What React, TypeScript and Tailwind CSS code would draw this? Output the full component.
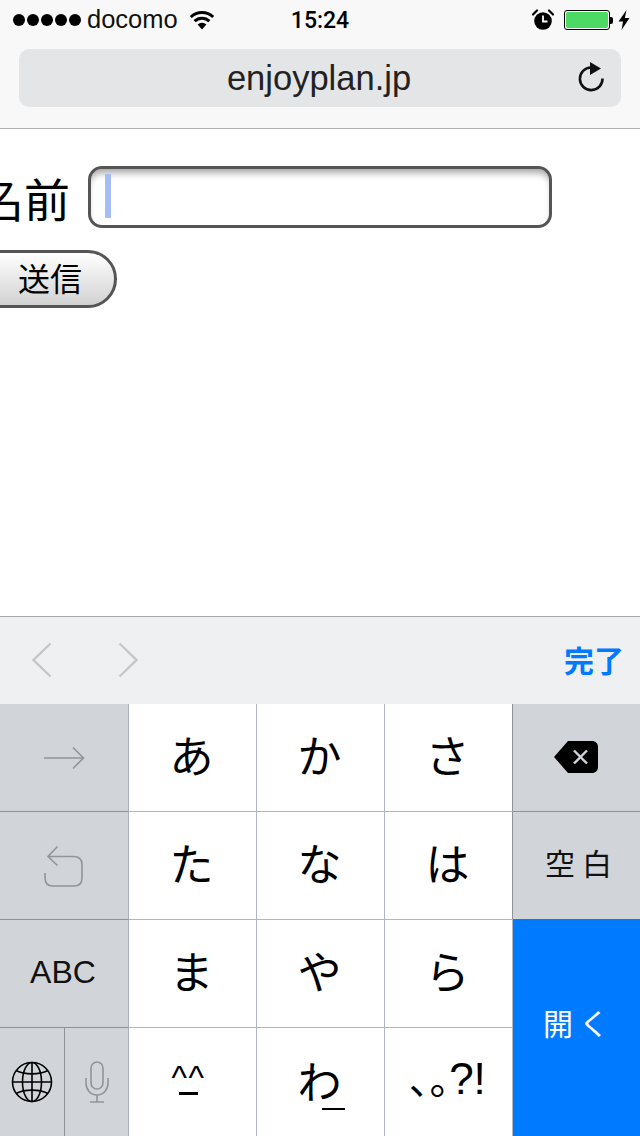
import type { ReactNode } from "react";

const latin = "font-['Liberation_Sans','Noto_Sans_CJK_JP',sans-serif]";
const jp = "font-['Noto_Sans_CJK_JP',sans-serif]";

function Wifi() {
  return (
    <svg width="26" height="19" viewBox="0 0 26 19" className="ml-[11px]">
      <path d="M13 18.500 L8.600 13.500 A6.600 6.600 0 0 1 17.400 13.500 Z" fill="#000" />
      <path d="M5.600 10.200 A10.800 10.800 0 0 1 20.400 10.200" fill="none" stroke="#000" strokeWidth="3" />
      <path d="M1.800 6 A16.200 16.200 0 0 1 24.200 6" fill="none" stroke="#000" strokeWidth="3" />
    </svg>
  );
}

function Alarm() {
  return (
    <svg width="22" height="22" viewBox="0 0 22 22">
      <circle cx="11" cy="12" r="8.800" fill="#000" />
      <path d="M11 6.500V12.500H15.500" fill="none" stroke="#fff" strokeWidth="1.800" />
      <path d="M1 5.500 L5 1.500 M21 5.500 L17 1.500" stroke="#000" strokeWidth="2.200" strokeLinecap="round" />
    </svg>
  );
}

function Battery() {
  return (
    <div className="ml-[10px] flex items-center">
      <div className="w-[46px] h-[20px] rounded-[3px] border border-black p-[1px] bg-white">
        <div className="w-full h-full rounded-[2px] bg-[#4cd964]" />
      </div>
      <div className="w-[3px] h-[7px] rounded-r-[2px] bg-black" />
    </div>
  );
}

function Bolt() {
  return (
    <svg width="12" height="20" viewBox="0 0 12 20" className="ml-[5px]">
      <path d="M8.500 0 L0.500 11.500 H5 L3.500 20 L11.500 8 H6.800 Z" fill="#000" />
    </svg>
  );
}

function Reload() {
  return (
    <svg width="30" height="32" viewBox="0 0 30 32">
      <path d="M15 6.500 A11.300 11.300 0 1 0 26.500 17.500" fill="none" stroke="#111" strokeWidth="2.600" />
      <path d="M14 1 L25 7.500 L14 14 Z" fill="#111" />
    </svg>
  );
}

function Chevron({ dir }: { dir: "l" | "r" }) {
  return (
    <svg width="22" height="36" viewBox="0 0 22 36" className="-mt-[2px]">
      <path d={dir === "l" ? "M19.500 1.500 L2.500 18 L19.500 34.500" : "M2.500 1.500 L19.500 18 L2.500 34.500"} fill="none" stroke="#c4c6c9" strokeWidth="2.400" />
    </svg>
  );
}

function ArrowKey() {
  return (
    <svg width="42" height="24" viewBox="0 0 42 24">
      <path d="M1 12H40 M30 1.500 L40.500 12 L30 22.500" fill="none" stroke="#929497" strokeWidth="1.600" />
    </svg>
  );
}

function UndoKey() {
  return (
    <svg width="40" height="42" viewBox="0 0 40 42">
      <path d="M1 28V33C1 38 4 41 9 41H30C35 41 38 38 38 33V19C38 14.500 35 11.500 30 11.500H4.500 M13.500 1.500 L4 11.500 L13.500 20.500" fill="none" stroke="#929497" strokeWidth="1.600" />
    </svg>
  );
}

function Backspace() {
  return (
    <svg width="44" height="32" viewBox="0 0 44 32" className="mr-[2px] -mt-[1px]">
      <path d="M14 0H38C41.500 0 44 2.500 44 6V26C44 29.500 41.500 32 38 32H14L0 16Z" fill="#000" />
      <path d="M20 9.500L33 22.500M33 9.500L20 22.500" stroke="#d1d5da" strokeWidth="2.400" />
    </svg>
  );
}

function Globe() {
  return (
    <svg width="42" height="42" viewBox="0 0 42 42" fill="none" stroke="#000" strokeWidth="1.600">
      <circle cx="21" cy="21" r="19.500" />
      <ellipse cx="21" cy="21" rx="9.500" ry="19.500" />
      <path d="M21 1.500V40.500M1.500 21H40.500" />
      <path d="M5 9.500C14 14 28 14 37 9.500M5 32.500C14 28 28 28 37 32.500" />
    </svg>
  );
}

function Mic() {
  return (
    <svg width="24" height="42" viewBox="0 0 24 42" fill="none" stroke="#929497" strokeWidth="1.600">
      <rect x="6" y="1" width="12" height="27" rx="6" />
      <path d="M1 17V22C1 28.500 5.500 34 12 34C18.500 34 23 28.500 23 22V17M12 34V41M5 41H19" />
    </svg>
  );
}

function Cell({
  children,
  tone = "white",
  noTop,
}: {
  children?: ReactNode;
  tone?: "white" | "gray" | "grayEnd" | "whiteEnd";
  noTop?: boolean;
}) {
  const tones = {
    white: "bg-white border-t-[#b0b5c1] border-r border-r-[#b0b5c1]",
    whiteEnd: "bg-white border-t-[#b0b5c1] border-r border-r-[#8f9297]",
    gray: "bg-[#d1d5da] border-t-[#8f9297] border-r border-r-[#aab0bd]",
    grayEnd: "bg-[#d1d5da] border-t-[#8f9297]",
  };
  return (
    <div className={`flex items-center justify-center ${noTop ? "" : "border-t"} ${tones[tone]}`}>
      {children}
    </div>
  );
}

function Kana({ t }: { t: string }) {
  return <span className={`text-[44px] leading-none text-black mr-[2px] -mt-[8px] ${jp}`}>{t}</span>;
}

export default function App() {
  return (
    <div className={`w-[640px] h-[1136px] flex flex-col overflow-hidden bg-white ${latin}`}>
      <header className="bg-[#f8f8f8] border-b border-[#b2b2b2] h-[129px] shrink-0">
        <div className="h-[40px] flex items-center pl-[13px] pr-[10px] relative text-black">
          <div className="flex gap-[2px]">
            {[0, 1, 2, 3, 4].map((i) => (
              <span key={i} className="w-[12px] h-[12px] rounded-full bg-black" />
            ))}
          </div>
          <span className="ml-[6px] text-[25.5px] leading-none text-[#111]">docomo</span>
          <Wifi />
          <span className="absolute left-0 right-0 text-center text-[23px] font-medium leading-none font-['Roboto',sans-serif]">15:24</span>
          <div className="ml-auto flex items-center">
            <Alarm />
            <Battery />
            <Bolt />
          </div>
        </div>
        <div className="mx-[19px] mt-[9px] h-[58px] rounded-[10px] bg-[#e4e5e7] relative flex items-center justify-center">
          <span className="text-[34.500px] leading-none text-[#222] mr-[2px]">enjoyplan.jp</span>
          <div className="absolute right-[15px] top-[12px]">
            <Reload />
          </div>
        </div>
      </header>

      <main className="flex-1 bg-white text-black">
        <div className="flex items-center mt-[37px] -ml-[22px]">
          <span className={`text-[46px] leading-none ${jp}`}>名前</span>
          <div className="ml-[18px] w-[464px] h-[62px] rounded-[14px] border-[3px] border-[#555] bg-white shadow-[inset_0_7px_7px_-3px_rgba(0,0,0,0.35)] pl-[14px] pt-[5px]">
            <div className="w-[6px] h-[44px] bg-[#a5bcf5]" />
          </div>
        </div>
        <div className="mt-[22px] -ml-[30px] w-[147px] h-[58px] rounded-full border-[3px] border-[#555] bg-gradient-to-b from-white to-[#d2d2d2] flex items-center justify-center pl-[13px]">
          <span className={`text-[32px] leading-none -mt-[4px] ${jp}`}>送信</span>
        </div>
      </main>

      <div className="h-[88px] shrink-0 bg-[#eff0f2] border-t border-[#a7a8ab] flex items-center pl-[31px] pr-[16px]">
        <Chevron dir="l" />
        <div className="ml-[64px]">
          <Chevron dir="r" />
        </div>
        <span className={`ml-auto text-[30px] leading-none font-bold text-[#007aff] -mt-[4px] ${jp}`}>完了</span>
      </div>

      <div className="grid grid-cols-[129px_128px_128px_128px_127px] grid-rows-[107px_108px_108px_109px] shrink-0 h-[432px]">
        <Cell tone="gray" noTop><ArrowKey /></Cell>
        <Cell noTop><Kana t="あ" /></Cell>
        <Cell noTop><Kana t="か" /></Cell>
        <Cell tone="whiteEnd" noTop><Kana t="さ" /></Cell>
        <Cell tone="grayEnd" noTop><Backspace /></Cell>

        <Cell tone="gray"><UndoKey /></Cell>
        <Cell><Kana t="た" /></Cell>
        <Cell><Kana t="な" /></Cell>
        <Cell tone="whiteEnd"><Kana t="は" /></Cell>
        <Cell tone="grayEnd">
          <span className={`text-[30px] leading-none tracking-[7px] text-[#111] pl-[11px] -mt-[7px] ${jp}`}>空白</span>
        </Cell>

        <Cell tone="gray">
          <span className="text-[32px] leading-none text-[#111] mr-[2px] -mt-[4px]">ABC</span>
        </Cell>
        <Cell><Kana t="ま" /></Cell>
        <Cell><Kana t="や" /></Cell>
        <Cell><Kana t="ら" /></Cell>
        <div className="row-span-2 bg-[#007aff] flex items-center justify-center">
          <span className={`text-[30px] leading-none tracking-[6px] text-white pl-[5px] -mt-[12px] ${jp}`}>開く</span>
        </div>

        <div className="grid grid-cols-[65px_1fr] bg-[#d1d5da] border-t border-t-[#8f9297] border-r border-r-[#aab0bd]">
          <div className="flex items-center justify-center border-r border-[#8f9297]"><Globe /></div>
          <div className="flex items-center justify-center"><Mic /></div>
        </div>
        <Cell>
          <div className="flex flex-col items-center mr-[8px]">
            <span className="text-[33px] leading-[20px] h-[20px] text-black tracking-[1.500px] -mt-[2px]">^^</span>
            <span className="w-[19px] h-[3px] bg-black mt-[4px]" />
          </div>
        </Cell>
        <Cell>
          <div className="relative">
            <Kana t="わ" />
            <span className="absolute left-[24px] bottom-[-4px] w-[23px] h-[2px] bg-black" />
          </div>
        </Cell>
        <Cell>
          <div className="flex items-baseline whitespace-nowrap text-black mr-[2px] -mt-[6px]">
            <span className={`text-[40px] leading-none [font-feature-settings:'palt'] ${jp}`}>、。</span>
            <span className="text-[44px] leading-none">?!</span>
          </div>
        </Cell>
      </div>
    </div>
  );
}
